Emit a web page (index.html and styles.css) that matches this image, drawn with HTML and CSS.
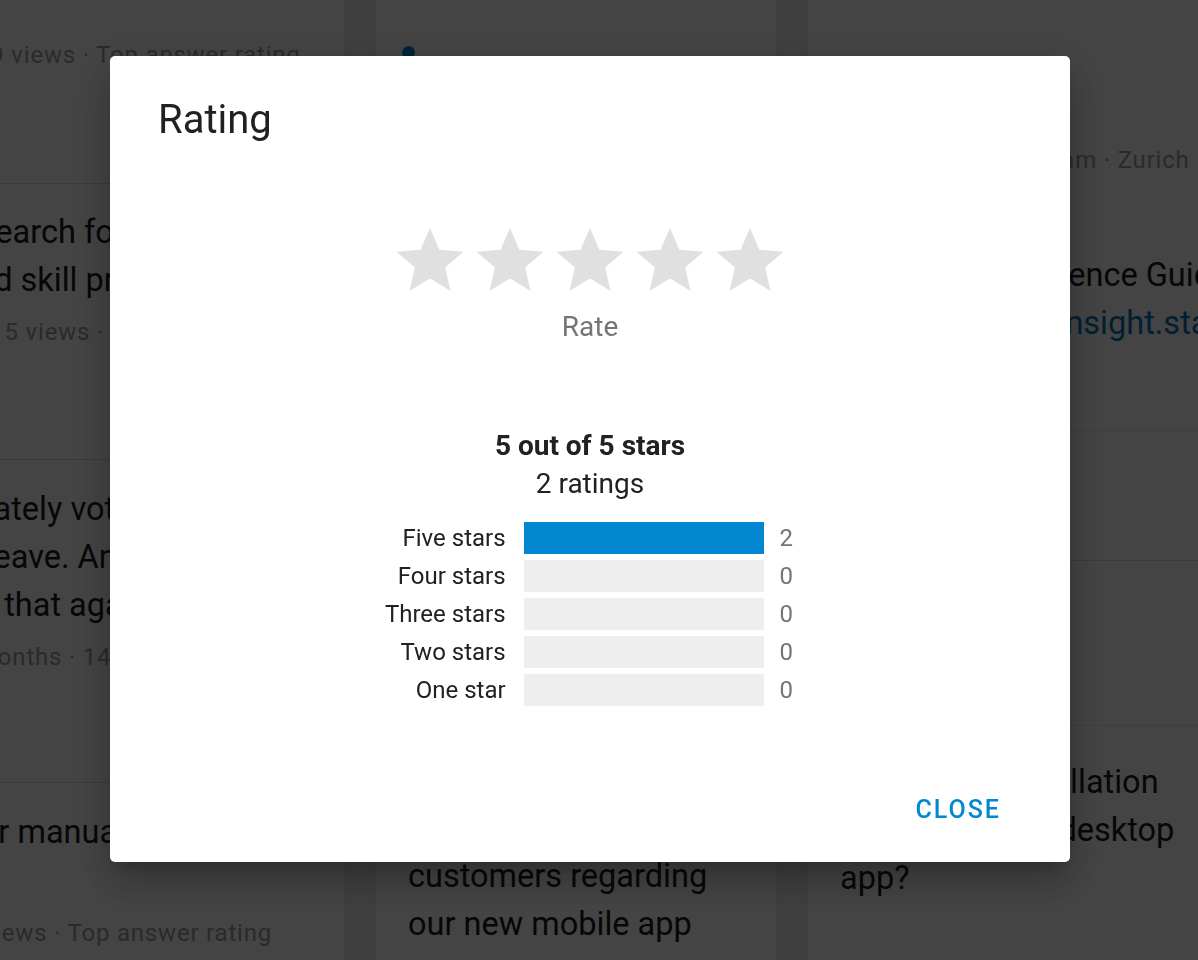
FILE: index.html
```html
<!DOCTYPE html>
<html lang="en">
<head>
<meta charset="utf-8">
<title>Rating</title>
<link rel="stylesheet" href="styles.css">
</head>
<body>
<div class="page">
  <div class="col">
    <div class="card card-a">
      <div class="meta">19 views · Top answer rating</div>
    </div>
    <div class="card card-b">
      <div class="title-line">Search for experts</div>
      <div class="title-line">Ed skill profiles</div>
      <div class="meta meta-gap">115 views · Top answer rating</div>
    </div>
    <div class="card card-c">
      <div class="title-line">Lately voted on</div>
      <div class="title-line">Leave. Anyone</div>
      <div class="title-line">If that again?</div>
      <div class="meta meta-gap">months · 14 views</div>
    </div>
    <div class="card card-d">
      <div class="title-line">Or manually update?</div>
      <div class="meta meta-far">&nbsp;views · Top answer rating</div>
    </div>
  </div>

  <div class="col">
    <div class="card card-status">
      <span class="status-dot"></span>
    </div>
    <div class="card card-question">
      <div class="title-line">How do we survey</div>
      <div class="title-line">customers regarding</div>
      <div class="title-line">our new mobile app</div>
    </div>
  </div>

  <div class="col">
    <div class="card card-event">
      <div class="event-body">
        <div class="meta">Product Insights Team · Zurich</div>
        <div class="title-line event-title">Developer Reference Guide</div>
        <div class="title-line link">https://supportinsight.stackexchange.com</div>
      </div>
      <div class="event-footer"></div>
    </div>
    <div class="card card-install">
      <div class="title-line">Is there an installation</div>
      <div class="title-line">manual for the desktop</div>
      <div class="title-line">app?</div>
    </div>
  </div>
</div>

<div class="scrim"></div>

<div class="dialog" role="dialog" aria-labelledby="dlg-title">
  <h2 class="dialog-title" id="dlg-title">Rating</h2>

  <div class="stars">
    <svg class="star" viewBox="0 0 24 24" width="80" height="80"><path d="M12 17.27L18.18 21l-1.64-7.03L22 9.24l-7.19-.61L12 2 9.19 8.63 2 9.24l5.46 4.73L5.82 21z"/></svg>
    <svg class="star" viewBox="0 0 24 24" width="80" height="80"><path d="M12 17.27L18.18 21l-1.64-7.03L22 9.24l-7.19-.61L12 2 9.19 8.63 2 9.24l5.46 4.73L5.82 21z"/></svg>
    <svg class="star" viewBox="0 0 24 24" width="80" height="80"><path d="M12 17.27L18.18 21l-1.64-7.03L22 9.24l-7.19-.61L12 2 9.19 8.63 2 9.24l5.46 4.73L5.82 21z"/></svg>
    <svg class="star" viewBox="0 0 24 24" width="80" height="80"><path d="M12 17.27L18.18 21l-1.64-7.03L22 9.24l-7.19-.61L12 2 9.19 8.63 2 9.24l5.46 4.73L5.82 21z"/></svg>
    <svg class="star" viewBox="0 0 24 24" width="80" height="80"><path d="M12 17.27L18.18 21l-1.64-7.03L22 9.24l-7.19-.61L12 2 9.19 8.63 2 9.24l5.46 4.73L5.82 21z"/></svg>
  </div>
  <div class="rate-label">Rate</div>

  <div class="summary">5 out of 5 stars</div>
  <div class="count-total">2 ratings</div>

  <div class="breakdown">
    <div class="bd-label">Five stars</div>
    <div class="bd-bar"><div class="bd-fill" style="width:100%"></div></div>
    <div class="bd-count">2</div>

    <div class="bd-label">Four stars</div>
    <div class="bd-bar"><div class="bd-fill" style="width:0%"></div></div>
    <div class="bd-count">0</div>

    <div class="bd-label">Three stars</div>
    <div class="bd-bar"><div class="bd-fill" style="width:0%"></div></div>
    <div class="bd-count">0</div>

    <div class="bd-label">Two stars</div>
    <div class="bd-bar"><div class="bd-fill" style="width:0%"></div></div>
    <div class="bd-count">0</div>

    <div class="bd-label">One star</div>
    <div class="bd-bar"><div class="bd-fill" style="width:0%"></div></div>
    <div class="bd-count">0</div>
  </div>

  <div class="dialog-actions">
    <button class="btn-text" type="button">Close</button>
  </div>
</div>
</body>
</html>
```

FILE: styles.css
```css
html, body {
  margin: 0;
  padding: 0;
}

body {
  width: 1198px;
  height: 960px;
  overflow: hidden;
  background: #eeeeee;
  font-family: Roboto, "Noto Sans", "Liberation Sans", sans-serif;
  color: #212121;
}

/* ---------- background page ---------- */
.page {
  display: flex;
  gap: 30px;
  margin-left: -57px;
  height: 960px;
}

.col {
  flex: none;
  width: 402px;
  display: flex;
  flex-direction: column;
  background: #ffffff;
  border-left: 1px solid #e3e3e3;
  border-right: 1px solid #e3e3e3;
  box-sizing: border-box;
}

.card {
  box-sizing: border-box;
  padding: 24px 32px 0;
  border-bottom: 1px solid #dcdcdc;
}

.title-line {
  font-size: 32.5px;
  line-height: 48px;
  color: #1a1a1a;
  white-space: nowrap;
}

.meta {
  font-size: 24px;
  line-height: 32px;
  letter-spacing: 0.8px;
  color: #9e9e9e;
  white-space: nowrap;
}

.meta-gap { margin-top: 12px; }
.meta-far { margin-top: 61px; }

.card-a {
  height: 184px;
  padding-top: 39px;
}
.card-b { height: 276px; }
.card-c { height: 323px; padding-top: 25px; }
.card-d { flex: 1; padding-top: 25px; border-bottom: 0; }

.card-status {
  height: 780px;
  padding-top: 46px;
}
.status-dot {
  display: block;
  width: 13px;
  height: 13px;
  margin-left: -6px;
  border-radius: 50%;
  background: #0288d1;
}
.card-question { flex: 1; border-bottom: 0; }

.card-event {
  padding: 0;
  height: 561px;
  display: flex;
  flex-direction: column;
}
.event-body {
  box-sizing: border-box;
  height: 430px;
  padding: 144px 32px 0;
}
.event-title { margin-top: 75px; }
.link { color: #0277bd; }
.event-footer {
  flex: 1;
  border-top: 1px solid #e6e6e6;
}

.card-install {
  flex: 1;
  margin-top: 164px;
  padding-top: 32px;
  border-top: 1px solid #e6e6e6;
  border-bottom: 0;
}

/* ---------- scrim ---------- */
.scrim {
  position: fixed;
  inset: 0;
  background: rgba(0, 0, 0, 0.733);
}

/* ---------- dialog ---------- */
.dialog {
  position: fixed;
  left: 110px;
  top: 56px;
  width: 960px;
  height: 806px;
  box-sizing: border-box;
  background: #ffffff;
  border-radius: 5px;
  display: flex;
  flex-direction: column;
  box-shadow: 0 11px 15px -7px rgba(0, 0, 0, 0.2),
              0 24px 38px 3px rgba(0, 0, 0, 0.14),
              0 9px 46px 8px rgba(0, 0, 0, 0.12);
}

.dialog-title {
  margin: 0;
  padding: 40px 48px 0;
  font-size: 40px;
  line-height: 48px;
  font-weight: 400;
  color: #212121;
}

.stars {
  margin-top: 77px;
  margin-left: -1px;
  display: flex;
  justify-content: center;
}
.star {
  display: block;
  fill: #e0e0e0;
}

.rate-label {
  margin-top: 10px;
  text-align: center;
  font-size: 28px;
  line-height: 32px;
  color: #757575;
}

.summary {
  margin-top: 84px;
  text-align: center;
  font-size: 28px;
  line-height: 38px;
  font-weight: 700;
  color: #212121;
}

.count-total {
  text-align: center;
  font-size: 28px;
  line-height: 38px;
  color: #212121;
}

.breakdown {
  margin-top: 19px;
  margin-left: -2px;
  display: grid;
  grid-template-columns: auto 240px auto;
  column-gap: 16px;
  row-gap: 6px;
  justify-content: center;
  font-size: 24px;
  line-height: 32px;
}
.bd-label {
  text-align: right;
  padding-right: 2px;
  color: #212121;
}
.bd-bar {
  height: 32px;
  background: #eeeeee;
}
.bd-fill {
  height: 100%;
  background: #0288d1;
}
.bd-count {
  color: #757575;
}

.dialog-actions {
  margin-top: auto;
  display: flex;
  justify-content: flex-end;
  padding: 0 55px 21px 0;
}
.btn-text {
  height: 62px;
  padding: 0 14px;
  border: 0;
  background: transparent;
  font-family: Roboto, "Noto Sans", "Liberation Sans", sans-serif;
  font-size: 25px;
  font-weight: 500;
  line-height: 62px;
  letter-spacing: 2px;
  text-transform: uppercase;
  color: #0288d1;
  cursor: pointer;
}
```
